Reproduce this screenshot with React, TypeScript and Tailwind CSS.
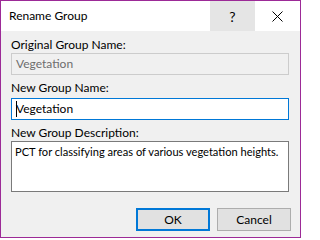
const font = { fontFamily: 'Lato, "Noto Sans", sans-serif' };

const App = () => (
  <div
    className="w-[301px] h-[238px] border border-[#9c2a97] bg-[#f0f0f0] flex flex-col text-[12px] text-black"
    style={font}
  >
    {/* title bar */}
    <div className="h-[30px] bg-white flex items-stretch">
      <div className="flex-1 flex items-center pl-[8px] leading-[16px]">Rename Group</div>
      <div className="w-[45px] bg-[#e5e5e5] flex items-center justify-center text-[14px]">?</div>
      <div className="w-[45px] flex items-center justify-center">
        <svg width="11" height="11" viewBox="0 0 11 11" fill="none" stroke="black" strokeWidth="1">
          <path d="M0.5 0.5 L10.5 10.5 M10.5 0.5 L0.5 10.5" />
        </svg>
      </div>
    </div>

    {/* body */}
    <div className="flex-1 flex flex-col pl-[10px] pr-[9px] pt-[6px]">
      <label className="block h-[16px] leading-[16px]">Original Group Name:</label>
      <div className="w-[278px] h-[22px] border border-[#cccccc] bg-[#f0f0f0] flex items-center pl-[4px] text-[#6d6d6d]">
        Vegetation
      </div>

      <label className="block h-[16px] leading-[16px] mt-[5px]">New Group Name:</label>
      <div className="w-[278px] h-[22px] mt-[2px] border border-[#0078d7] bg-white flex items-center pl-[4px] relative">
        <span className="absolute left-[4px] top-[2px] w-px h-[16px] bg-black" />
        Vegetation
      </div>

      <label className="block h-[16px] leading-[16px] mt-[5px]">New Group Description:</label>
      <div className="w-[278px] h-[51px] border border-[#7a7a7a] bg-white pl-[3px] pt-[2px] leading-[16px] whitespace-nowrap text-[11.1px]">
        PCT for classifying areas of various vegetation heights.
      </div>

      <div className="flex justify-end gap-[7px] mt-[16px]">
        <button className="w-[74px] h-[23px] border-2 border-[#0078d7] bg-[#e1e1e1] flex items-center justify-center">
          OK
        </button>
        <button className="w-[74px] h-[23px] border border-[#adadad] bg-[#e1e1e1] flex items-center justify-center">
          Cancel
        </button>
      </div>
    </div>
  </div>
);

export default App;
